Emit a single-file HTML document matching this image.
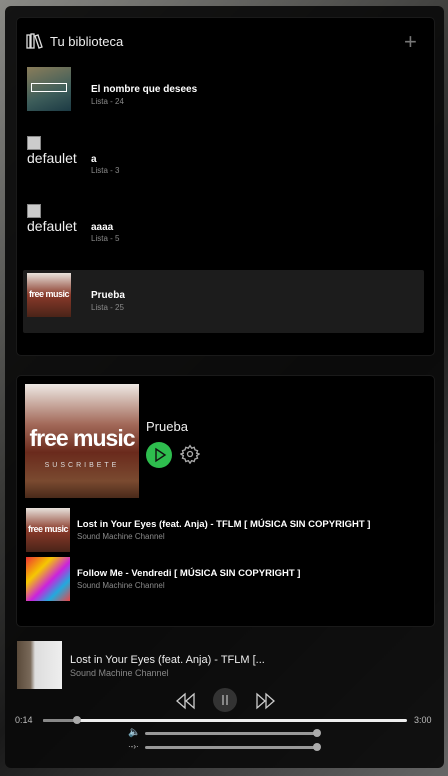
<!DOCTYPE html>
<html><head><meta charset="utf-8"><style>
*{margin:0;padding:0;box-sizing:border-box}
body{width:448px;height:776px;overflow:hidden;font-family:"Liberation Sans",sans-serif;background:linear-gradient(135deg,#8a8a86 0%,#3a3a38 40%,#1a1a1a 60%,#666 100%);position:relative;color:#fff}
.outer{position:absolute;left:5px;top:6px;width:439px;height:762px;background:rgba(10,10,10,0.92);border-radius:6px}
.panel{position:absolute;left:16px;width:419px;background:#000;border:1px solid #1a1a1a;border-radius:5px}
.abs{position:absolute}
.t{font-size:10px;font-weight:bold;color:#fff}
.s{font-size:8px;color:#8a8a8a}
.bar{position:absolute;height:3px;border-radius:2px}
.fm{white-space:nowrap;font-size:9px;font-weight:bold;text-align:center;letter-spacing:-0.5px}
</style></head><body>
<div class="outer"></div>
<div class="panel" style="top:17px;height:339px"></div>
<svg class="abs" style="left:26px;top:33px" width="17" height="16" viewBox="0 0 17 16" fill="none" stroke="#ddd" stroke-width="1.3"><rect x="1" y="2" width="3" height="13"/><rect x="5" y="1" width="3" height="14"/><path d="M9 3l3-1 4 12-3 1z"/></svg>
<div class="abs" style="left:50px;top:34px;font-size:13px;color:#eee">Tu biblioteca</div>
<div class="abs" style="left:404px;top:29px;font-size:22px;color:#777;font-weight:300">+</div>

<div class="abs" style="left:27px;top:67px;width:44px;height:44px;background:linear-gradient(160deg,#8a7d5a,#3d5d5a 60%,#1c3a44)"><div style="margin:16px 4px 0;border:1px solid #fff;height:9px"></div></div>
<div class="abs t" style="left:91px;top:84px">El nombre que desees</div>
<div class="abs s" style="left:91px;top:97px">Lista - 24</div>

<div class="abs" style="left:27px;top:136px;width:14px;height:14px;border:1px solid #888;background:#ccc"></div>
<div class="abs" style="left:27px;top:150px;font-size:14px;color:#eee">defaulet</div>
<div class="abs t" style="left:91px;top:154px">a</div>
<div class="abs s" style="left:91px;top:166px">Lista - 3</div>

<div class="abs" style="left:27px;top:204px;width:14px;height:14px;border:1px solid #888;background:#ccc"></div>
<div class="abs" style="left:27px;top:218px;font-size:14px;color:#eee">defaulet</div>
<div class="abs t" style="left:91px;top:222px">aaaa</div>
<div class="abs s" style="left:91px;top:234px">Lista - 5</div>

<div class="abs" style="left:23px;top:270px;width:401px;height:63px;background:#1c1c1c;border-radius:2px"></div>
<div class="abs" style="left:27px;top:273px;width:44px;height:44px;overflow:hidden;background:linear-gradient(180deg,#e8e2dc,#8a3a2a 50%,#4a2418)"><div class="fm" style="margin-top:16px">free music</div></div>
<div class="abs t" style="left:91px;top:290px">Prueba</div>
<div class="abs s" style="left:91px;top:303px">Lista - 25</div>

<div class="panel" style="top:375px;height:252px"></div>
<div class="abs" style="left:25px;top:384px;width:114px;height:114px;overflow:hidden;background:linear-gradient(180deg,#eee9e4 0%,#a36a5a 35%,#6a2a1c 60%,#7a4a30 85%,#4a2a1a)">
<div style="margin-top:41px;font-size:23px;font-weight:bold;text-align:center;letter-spacing:-1px;white-space:nowrap">free music</div>
<div style="margin-top:10px;font-size:7px;text-align:center;letter-spacing:3px;color:#ddd">SUSCRIBETE</div></div>
<div class="abs" style="left:146px;top:419px;font-size:13px;color:#eee">Prueba</div>
<div class="abs" style="left:146px;top:442px;width:26px;height:26px;border-radius:50%;background:#2ebd4e"></div>
<svg class="abs" style="left:146px;top:442px" width="26" height="26"><path d="M10 7l9 6-9 6z" fill="none" stroke="#111" stroke-width="1.4"/></svg>
<svg class="abs" style="left:180px;top:444px" width="20" height="20" viewBox="0 0 24 24" fill="none" stroke="#aaa" stroke-width="1.6"><circle cx="12" cy="12" r="3"/><path d="M12 2l2 3 3-1 1 3 3 1-1 3 3 1-3 2 1 3-3 1-1 3-3-1-2 3-2-3-3 1-1-3-3-1 1-3-3-2 3-1-1-3 3-1 1-3 3 1z"/></svg>

<div class="abs" style="left:26px;top:508px;width:44px;height:44px;overflow:hidden;background:linear-gradient(180deg,#e8e2dc,#8a3a2a 50%,#4a2418)"><div class="fm" style="margin-top:16px">free music</div></div>
<div class="abs t" style="left:77px;top:519px;font-size:9.5px">Lost in Your Eyes (feat. Anja) - TFLM [ MÚSICA SIN COPYRIGHT ]</div>
<div class="abs s" style="left:77px;top:532px">Sound Machine Channel</div>
<div class="abs" style="left:26px;top:557px;width:44px;height:44px;background:linear-gradient(135deg,#e33 0%,#f5c800 30%,#c2d 55%,#2ad 75%,#e44 100%)"></div>
<div class="abs t" style="left:77px;top:568px;font-size:9.5px">Follow Me - Vendredi [ MÚSICA SIN COPYRIGHT ]</div>
<div class="abs s" style="left:77px;top:581px">Sound Machine Channel</div>

<div class="abs" style="left:17px;top:641px;width:45px;height:48px;background:linear-gradient(90deg,#5a4a3a 0%,#7a6a5a 30%,#ddd 40%,#eee 100%)"></div>
<div class="abs" style="left:70px;top:654px;font-size:11px;color:#eee">Lost in Your Eyes (feat. Anja) - TFLM [...</div>
<div class="abs" style="left:70px;top:668px;font-size:9px;color:#888">Sound Machine Channel</div>
<svg class="abs" style="left:175px;top:692px" width="100" height="18" fill="none" stroke="#ccc" stroke-width="1.3"><path d="M10 2l-8 7 8 7zM19 2l-8 7 8 7z"/><path d="M82 2l8 7-8 7zM91 2l8 7-8 7z"/></svg>
<div class="abs" style="left:213px;top:688px;width:24px;height:24px;border-radius:50%;background:#333"></div>
<div class="abs" style="left:222px;top:695px;width:2px;height:10px;border:1px solid #888"></div>
<div class="abs" style="left:226px;top:695px;width:2px;height:10px;border:1px solid #888"></div>
<div class="abs" style="left:15px;top:715px;font-size:9px;color:#bbb">0:14</div>
<div class="bar" style="left:43px;top:719px;width:364px;background:#eee"></div>
<div class="bar" style="left:43px;top:719px;width:33px;background:#888"></div>
<div class="abs" style="left:73px;top:716px;width:8px;height:8px;border-radius:50%;background:#aaa"></div>
<div class="abs" style="left:414px;top:715px;font-size:9px;color:#bbb">3:00</div>
<div class="abs" style="left:128px;top:727px;font-size:10px;color:#ccc">🔈</div>
<div class="bar" style="left:145px;top:732px;width:172px;background:#999"></div>
<div class="abs" style="left:313px;top:729px;width:8px;height:8px;border-radius:50%;background:#aaa"></div>
<div class="abs" style="left:128px;top:742px;font-size:8px;color:#ccc">·-›·</div>
<div class="bar" style="left:145px;top:746px;width:172px;background:#999"></div>
<div class="abs" style="left:313px;top:743px;width:8px;height:8px;border-radius:50%;background:#aaa"></div>
</body></html>
